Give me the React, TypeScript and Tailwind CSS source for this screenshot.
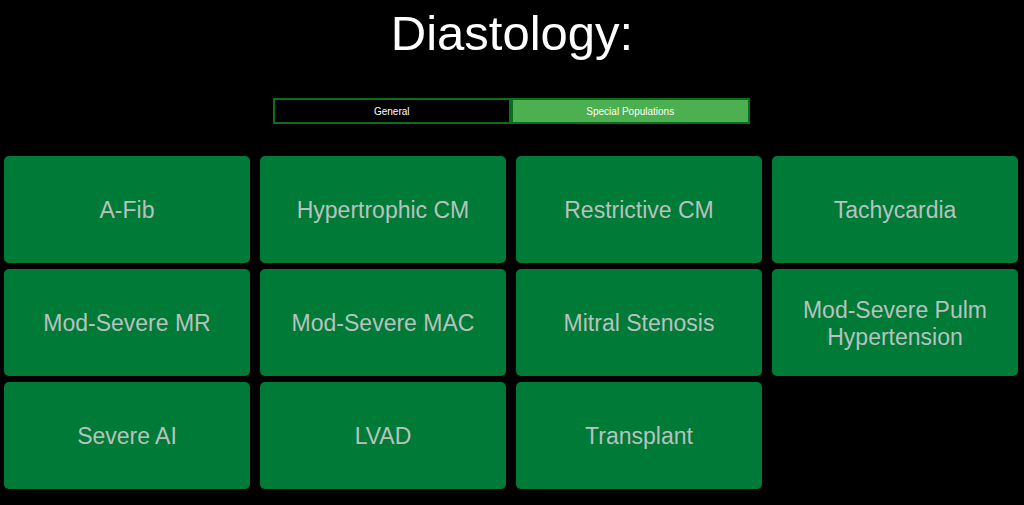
import { useState } from 'react'

const ITEMS = [
  'A-Fib',
  'Hypertrophic CM',
  'Restrictive CM',
  'Tachycardia',
  'Mod-Severe MR',
  'Mod-Severe MAC',
  'Mitral Stenosis',
  'Mod-Severe Pulm Hypertension',
  'Severe AI',
  'LVAD',
  'Transplant',
]

export default function App() {
  const [tab, setTab] = useState<'general' | 'special'>('special')

  return (
    <div className="min-h-screen bg-black font-['Liberation_Sans',Arial,sans-serif]">
      <h1 className="pt-[6px] text-center text-[49px] leading-[55px] text-white">Diastology:</h1>

      <div className="mt-[37px] flex justify-center">
        <div className="mr-[2px] flex w-[477px]">
          <TabButton active={tab === 'general'} onClick={() => setTab('general')}>
            General
          </TabButton>
          <TabButton active={tab === 'special'} onClick={() => setTab('special')}>
            Special Populations
          </TabButton>
        </div>
      </div>

      <div className="mt-[32px] grid grid-cols-4 gap-x-[10px] gap-y-[6px] pl-[4px] pr-[6px]">
        {ITEMS.map((item) => (
          <button
            key={item}
            className="flex h-[107px] items-center justify-center rounded-[5px] bg-[#007a37] px-3 pt-[2px] text-center text-[23px] leading-[27px] text-[#b8c2bf]"
          >
            {item}
          </button>
        ))}
      </div>
    </div>
  )
}

function TabButton({
  active,
  onClick,
  children,
}: {
  active: boolean
  onClick: () => void
  children: React.ReactNode
}) {
  return (
    <button
      onClick={onClick}
      className={`h-[26px] flex-1 border-2 border-[#0a6e1a] text-[10px] text-white ${
        active ? 'bg-[#4caf50]' : 'bg-black'
      }`}
    >
      {children}
    </button>
  )
}
